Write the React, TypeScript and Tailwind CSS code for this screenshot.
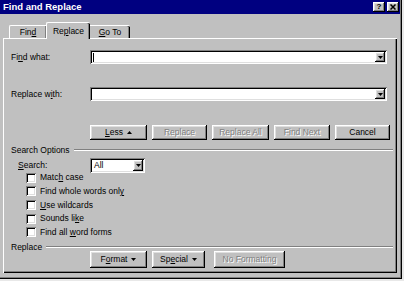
import type { ReactNode } from 'react';
import { clsx } from 'clsx';

const raised =
  'bg-[#c0c0c0] shadow-[inset_-1px_-1px_0_#000,inset_1px_1px_0_#fff,inset_-2px_-2px_0_#808080,inset_2px_2px_0_#dfdfdf]';
const sunken =
  'bg-white shadow-[inset_1px_1px_0_#808080,inset_-1px_-1px_0_#fff,inset_2px_2px_0_#000,inset_-2px_-2px_0_#dfdfdf]';

const Btn = ({ children, disabled, className }: { children: ReactNode; disabled?: boolean; className?: string }) => (
  <div
    className={clsx(
      'flex items-center justify-center gap-[4px] leading-none',
      raised,
      disabled ? 'text-[#808080] [text-shadow:1px_1px_0_#fff]' : 'text-black',
      className
    )}
  >
    {children}
  </div>
);

const DownTri = () => (
  <svg width="5" height="3" viewBox="0 0 5 3">
    <path d="M0 0h5L2.5 3z" fill="#000" />
  </svg>
);

const DropBtn = () => (
  <div className={clsx('flex h-full w-[10px] items-center justify-center', raised)}>
    <svg width="5" height="3" viewBox="0 0 5 3">
      <path d="M0 0h5L2.5 3z" fill="#000" />
    </svg>
  </div>
);

const Field = ({ caret }: { caret?: boolean }) => (
  <div className={clsx('flex h-full w-[297px] items-stretch p-[2px]', sunken)}>
    <div className="flex flex-1 items-center pl-[1px]">
      {caret && <div className="h-[9px] w-[1px] bg-black" />}
    </div>
    <DropBtn />
  </div>
);

const Check = ({ children }: { children: ReactNode }) => (
  <div className="flex h-[13.6px] items-center pl-[15px]">
    <div className={clsx('h-[10px] w-[10px]', sunken)} />
    <span className="ml-[4px]">{children}</span>
  </div>
);

const Group = ({ label }: { label: string }) => (
  <div className="flex h-[10px] items-center pr-[4px]">
    <span>{label}</span>
    <div className="ml-[4px] flex-1 border-t border-b border-t-[#808080] border-b-white" />
  </div>
);

export default function App() {
  return (
    <div className="h-[281px] w-[404px] overflow-hidden bg-[#e8e8e8] font-['Liberation_Sans',Arial,sans-serif] text-[8.5px] text-black">
      <div className="flex h-[279px] w-[402px] flex-col bg-[#c0c0c0] shadow-[inset_-1px_-1px_0_#000,inset_-2px_-2px_0_#808080]">
        {/* Title bar */}
        <div className="flex h-[14px] w-[400px] items-center justify-between bg-[#000080] pl-[3px] pr-[1px]">
          <span className="text-[9.5px] font-bold leading-none text-white">Find and Replace</span>
          <div className="flex gap-[2px]">
            <div className={clsx('flex h-[10px] w-[12px] items-center justify-center text-[8px] font-bold leading-none', raised)}>?</div>
            <div className={clsx('flex h-[10px] w-[12px] items-center justify-center', raised)}>
              <svg width="6" height="6" viewBox="0 0 6 6">
                <path d="M0.5 0.5l5 5M5.5 0.5l-5 5" stroke="#000" strokeWidth="1.5" />
              </svg>
            </div>
          </div>
        </div>

        {/* Tabs */}
        <div className="mt-[8px] flex h-[16px] items-end pl-[9px]">
          <div className="flex h-[13px] w-[37px] items-center justify-center rounded-tl-[2px] border-t border-l border-white pt-[1px] shadow-[inset_-1px_0_0_#808080]">
            <span>Fin<u>d</u></span>
          </div>
          <div className="relative z-10 -mb-[1px] flex h-[17px] w-[44px] items-center justify-center rounded-t-[2px] border-t border-l border-white bg-[#c0c0c0] shadow-[inset_-1px_0_0_#000,inset_-2px_0_0_#808080]">
            <span>Re<u>p</u>lace</span>
          </div>
          <div className="flex h-[13px] w-[40px] items-center justify-center rounded-tr-[2px] border-t border-white pt-[1px] shadow-[inset_-1px_0_0_#000,inset_-2px_0_0_#808080]">
            <span><u>G</u>o To</span>
          </div>
        </div>

        {/* Panel */}
        <div className="mx-[3px] flex h-[235px] w-[394px] flex-col border-t border-l border-white pl-[7px] shadow-[inset_-1px_-1px_0_#000,inset_-2px_-2px_0_#808080]">
          <div className="mt-[11px] flex h-[14px] items-center">
            <span className="w-[79px]">Fi<u>n</u>d what:</span>
            <Field caret />
          </div>
          <div className="mt-[23px] flex h-[14px] items-center">
            <span className="w-[79px]">Replace w<u>i</u>th:</span>
            <Field />
          </div>

          <div className="mt-[24px] flex h-[15px] gap-[5px] pl-[79px]">
            <Btn className="w-[57px]">
              <span><u>L</u>ess</span>
              <svg width="5" height="4" viewBox="0 0 5 4">
                <path d="M0 3h5L2.5 0z" fill="#000" />
              </svg>
            </Btn>
            <Btn disabled className="w-[55px]">Replace</Btn>
            <Btn disabled className="w-[57px]">Replace All</Btn>
            <Btn disabled className="w-[56px]">Find Next</Btn>
            <Btn className="w-[55px]">Cancel</Btn>
          </div>

          <div className="mt-[5px]">
            <Group label="Search Options" />
          </div>

          <div className="mt-[3px] flex h-[15px] items-center pl-[7px]">
            <span className="w-[72px]"><u>S</u>earch:</span>
            <div className={clsx('flex h-full w-[55px] items-stretch p-[2px]', sunken)}>
              <div className="flex flex-1 items-center pl-[2px]">All</div>
              <DropBtn />
            </div>
          </div>

          <div className="-mt-[2px] flex flex-col">
            <Check>Matc<u>h</u> case</Check>
            <Check>Find whole words onl<u>y</u></Check>
            <Check><u>U</u>se wildcards</Check>
            <Check>Sounds li<u>k</u>e</Check>
            <Check>Find all <u>w</u>ord forms</Check>
          </div>

          <div className="mt-[3px]">
            <Group label="Replace" />
          </div>

          <div className="-mt-[1px] flex h-[17px] pl-[79px]">
            <Btn className="w-[57px]">
              <span>F<u>o</u>rmat</span>
              <DownTri />
            </Btn>
            <Btn className="ml-[5px] w-[53px]">
              <span>Sp<u>e</u>cial</span>
              <DownTri />
            </Btn>
            <Btn disabled className="ml-[9px] w-[71px]">No Formatting</Btn>
          </div>
        </div>
      </div>
    </div>
  );
}
